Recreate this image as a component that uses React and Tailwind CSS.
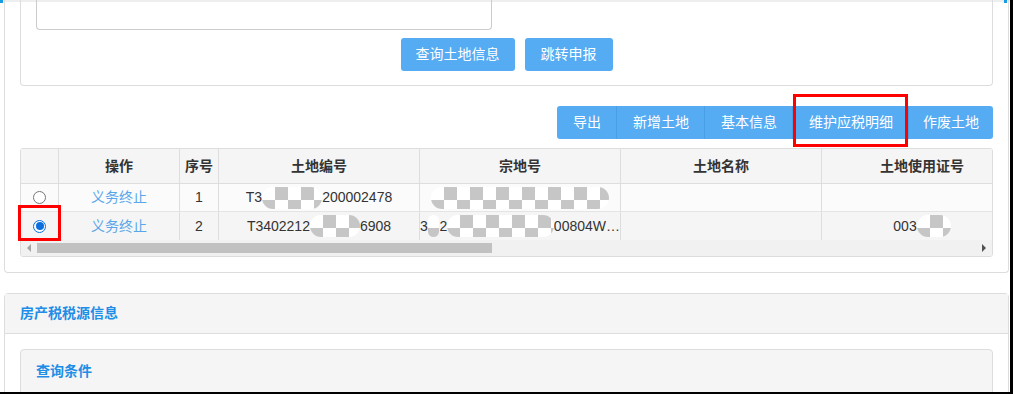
import React from 'react';

const font = { fontFamily: '"Liberation Sans", "Noto Sans CJK SC", sans-serif' };

function Mosaic({ w }) {
  return <span
    className="inline-block h-[22px] rounded-full align-middle bg-[image:repeating-conic-gradient(#c6c6c6_0_25%,#ffffff_0_50%)] bg-[length:26px_26px] blur-[0.5px]"
    style={{ width: w }}
  />;
}

function Radio({ checked }) {
  return <span className={`grid h-[13px] w-[13px] place-items-center rounded-full border ${checked ? 'border-[#0b6fe0] bg-white' : 'border-[#767676] bg-white'}`}>
    {checked && <span className="h-[8px] w-[8px] rounded-full bg-[#0b6fe0]"/>}
  </span>;
}

const cols = ['w-[37px]', 'w-[121px]', 'w-[39px]', 'w-[201px]', 'w-[201px]', 'w-[201px]', 'w-[201px]'];

export default function App() {
  return <div className="relative h-[394px] w-[1013px] overflow-hidden bg-white text-[14px] text-[#333]" style={font}>
    <div className="h-[2px] w-full bg-[#eeeeee]"/>
    <div className="absolute left-0 top-0 h-[3px] w-[3px] bg-[#1a9be0]"/>
    <div className="absolute left-[1004px] top-0 h-[3px] w-[3px] bg-[#1a9be0]"/>

    {/* land panel */}
    <div className="-mt-[2px] ml-[4px] w-[1005px] rounded-b-[4px] border-x border-b border-[#dddddd] px-[15px] pb-[15px]">
      <div className="rounded-b-[4px] border-x border-b border-[#dddddd] px-[15px] pb-[14px]">
        <div className="h-[30px] w-[456px] rounded-b-[4px] border-x border-b border-[#cccccc]"/>
        <div className="mt-[8px] flex justify-center gap-[10px]">
          <button className="h-[33px] rounded-[3px] bg-[#55acf3] px-[15px] text-white">查询土地信息</button>
          <button className="h-[33px] rounded-[3px] bg-[#55acf3] px-[16px] text-white">跳转申报</button>
        </div>
      </div>

      <div className="mt-[20px] flex justify-end">
        <div className="flex h-[33px] overflow-hidden rounded-[3px] bg-[#55acf3] text-white">
          <span className="flex items-center pl-[16px] pr-[15px]">导出</span>
          <span className="flex items-center border-l border-[#4a9ee4] pl-[16px] pr-[15px]">新增土地</span>
          <span className="flex items-center border-l border-[#4a9ee4] pl-[16px] pr-[15px]">基本信息</span>
          <span className="flex items-center border-l border-[#4a9ee4] pl-[16px] pr-[15px]">维护应税明细</span>
          <span className="flex items-center border-l border-[#4a9ee4] px-[14px]">作废土地</span>
        </div>
      </div>

      <div className="mt-[9px] overflow-hidden rounded-[3px] border border-[#dddddd]">
        <div className="w-[1200px]">
          <div className="flex h-[35px] border-b border-[#dddddd] bg-[#f5f5f5] font-bold">
            {['', '操作', '序号', '土地编号', '宗地号', '土地名称', '土地使用证号'].map((t, i) =>
              <div key={i} className={`${cols[i]} flex shrink-0 items-center justify-center ${i ? 'border-l border-[#dddddd]' : ''}`}>{t}</div>)}
          </div>
          <div className="flex h-[28px] border-b border-[#e4e4e4] bg-[#fbfbfb]">
            <div className={`${cols[0]} flex shrink-0 items-center justify-center`}><Radio/></div>
            <div className={`${cols[1]} flex shrink-0 items-center justify-center border-l border-[#dddddd] text-[#5aa6ea]`}>义务终止</div>
            <div className={`${cols[2]} flex shrink-0 items-center justify-center border-l border-[#dddddd]`}>1</div>
            <div className={`${cols[3]} flex shrink-0 items-center justify-center border-l border-[#dddddd]`}>T3<Mosaic w={60}/>200002478</div>
            <div className={`${cols[4]} flex shrink-0 items-center justify-center border-l border-[#dddddd]`}><Mosaic w={178}/></div>
            <div className={`${cols[5]} shrink-0 border-l border-[#dddddd]`}/>
            <div className={`${cols[6]} shrink-0 border-l border-[#dddddd]`}/>
          </div>
          <div className="flex h-[28px] bg-[#f5f5f5]">
            <div className={`${cols[0]} flex shrink-0 items-center justify-center`}><Radio checked/></div>
            <div className={`${cols[1]} flex shrink-0 items-center justify-center border-l border-[#dddddd] text-[#5aa6ea]`}>义务终止</div>
            <div className={`${cols[2]} flex shrink-0 items-center justify-center border-l border-[#dddddd]`}>2</div>
            <div className={`${cols[3]} flex shrink-0 items-center justify-center border-l border-[#dddddd]`}>T3402212<Mosaic w={50}/>6908</div>
            <div className={`${cols[4]} flex shrink-0 items-center justify-center border-l border-[#dddddd]`}>3<Mosaic w={12}/>2<Mosaic w={110}/>00804W…</div>
            <div className={`${cols[5]} shrink-0 border-l border-[#dddddd]`}/>
            <div className={`${cols[6]} flex shrink-0 items-center justify-center border-l border-[#dddddd]`}>003<Mosaic w={34}/></div>
          </div>
        </div>
        <div className="relative flex h-[16px] items-center bg-[#f1f1f1]">
          <span className="ml-[6px] h-0 w-0 border-y-[4px] border-r-[4px] border-y-transparent border-r-[#a3a3a3]"/>
          <span className="ml-[6px] h-[10px] w-[455px] bg-[#c1c1c1]"/>
          <span className="ml-auto mr-[6px] h-0 w-0 border-y-[4px] border-l-[4px] border-y-transparent border-l-[#505050]"/>
        </div>
      </div>
    </div>

    {/* house tax panel */}
    <div className="ml-[4px] mt-[20px] w-[1005px] rounded-t-[4px] border border-[#dddddd]">
      <div className="flex h-[40px] items-center border-b border-[#dddddd] bg-[#f5f5f5] px-[15px] font-bold text-[#1e8ee6]">房产税税源信息</div>
      <div className="px-[15px] pt-[15px]">
        <div className="rounded-t-[4px] border border-[#dddddd] bg-[#f5f5f5]">
          <div className="flex h-[42px] items-center px-[15px] font-bold text-[#1e8ee6]">查询条件</div>
        </div>
      </div>
    </div>

    {/* annotations */}
    <div className="absolute left-[793px] top-[94px] h-[53px] w-[115px] border-[3px] border-[#ff0000]"/>
    <div className="absolute left-[18px] top-[205px] h-[36px] w-[43px] border-[3px] border-[#ff0000]"/>
    <div className="absolute right-0 top-0 h-full w-[3px] bg-black"/>
    <div className="absolute bottom-0 left-0 h-[2px] w-full bg-black"/>
  </div>;
}
